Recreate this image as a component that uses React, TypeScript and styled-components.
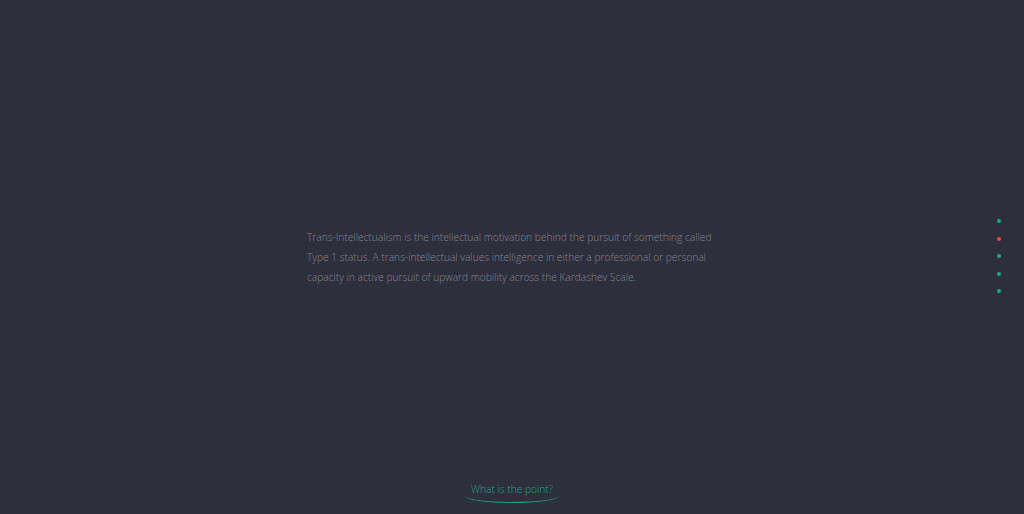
import React from "react";
import styled, { createGlobalStyle } from "styled-components";

const Global = createGlobalStyle`
  html, body { margin: 0; padding: 0; background: #2e2f3c; }
  body { font-family: "Open Sans", "Liberation Sans", sans-serif; }
`;

const Page = styled.div`
  height: 514px;
  display: flex;
  flex-direction: column;
  position: relative;
`;

const Main = styled.main`
  flex: 1;
  display: flex;
  align-items: center;
  justify-content: center;
  padding-top: 44px;
`;

const Paragraph = styled.p`
  margin: 0 0 0 10px;
  width: 420px;
  font-size: 10.2px;
  line-height: 20px;
  color: #85858f;
  font-weight: 300;
`;

const Footer = styled.footer`
  height: 44px;
  display: flex;
  justify-content: center;
  align-items: flex-start;
`;

const PointLink = styled.a`
  display: block;
  width: 94px;
  height: 26px;
  margin-top: 7px;
  padding-top: 2px;
  box-sizing: border-box;
  text-align: center;
  font-size: 10.2px;
  font-weight: 300;
  line-height: 20px;
  color: #1aa88a;
  text-decoration: none;
  border-bottom: 1.5px solid #1aa88a;
  border-radius: 0 0 50% 50% / 0 0 7px 7px;
`;

const DotNav = styled.nav`
  position: absolute;
  right: 23px;
  top: 219px;
  display: flex;
  flex-direction: column;
  gap: 13.5px;
`;

const Dot = styled.span<{ $active?: boolean }>`
  display: block;
  width: 4px;
  height: 4px;
  border-radius: 50%;
  background: ${(p) => (p.$active ? "#e5503e" : "#1aa88a")};
`;

export default function App() {
  return (
    <Page>
      <Global />
      <Main>
        <Paragraph>
          Trans-Intellectualism is the intellectual motivation behind the pursuit of something called
          <br />
          Type 1 status. A trans-intellectual values intelligence in either a professional or personal
          <br />
          capacity in active pursuit of upward mobility across the Kardashev Scale.
        </Paragraph>
      </Main>
      <Footer>
        <PointLink href="#">What is the point?</PointLink>
      </Footer>
      <DotNav>
        <Dot />
        <Dot $active />
        <Dot />
        <Dot />
        <Dot />
      </DotNav>
    </Page>
  );
}
